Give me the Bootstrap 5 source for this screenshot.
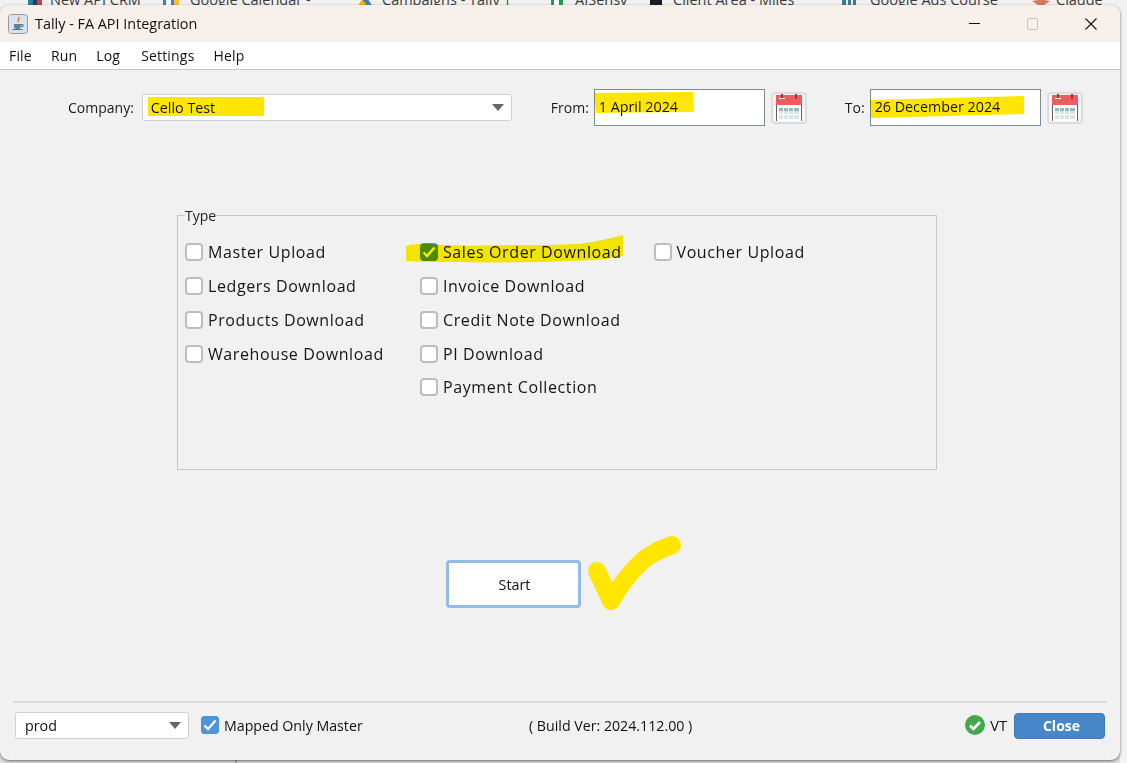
<!DOCTYPE html>
<html lang="en">
<head>
<meta charset="utf-8">
<title>Tally - FA API Integration</title>
<link href="https://cdn.jsdelivr.net/npm/bootstrap@5.3.0/dist/css/bootstrap.min.css" rel="stylesheet">
<style>
html,body{height:763px;overflow:hidden}
body{background:#dedede;font-family:"Open Sans","Noto Sans",sans-serif;color:#111;font-size:14px}
.desk-bar{height:20px;margin-bottom:-15px;background:#f1f1f1;overflow:hidden;position:relative;font-size:14.5px;color:#3c3c3c;line-height:14px}
.desk-bar span{position:absolute;top:-7px;white-space:nowrap}
.desk-bar svg{position:absolute;top:-5px}
.right-gap{position:fixed;left:1120px;top:0;width:7px;height:763px;background:#f3f3f3}
.back-tick{position:fixed;left:235px;top:755px;width:2px;height:8px;background:#a9a9a9}
.app-win{position:relative;width:1120px;height:755px;background:#f1f1f1;border-radius:9px;box-shadow:0 1px 3px rgba(0,0,0,.55);overflow:hidden}
.title-strip{height:37px;background:#f7efe9;font-size:14.4px;padding-left:8px;gap:7px}
.win-btn{width:58px;display:flex;justify-content:center;align-items:center}
.menu-strip{height:28px;background:#fff;border-bottom:1px solid #c9c9c9;padding-left:9px;gap:19px;font-size:14px;letter-spacing:.18px;line-height:27px}
.menu-log{margin-right:2px}
.top-row{margin-top:19px;height:37px;padding-left:68px}
.lbl{font-size:14px;white-space:nowrap;color:#1a1a1a}
.cmp-select.form-select,.env-select.form-select{font-family:inherit;font-size:14.3px;color:#111;border:1px solid #cfcfcf;border-radius:3px;height:27px;padding:0 20px 0 8px;background-color:#fff;background-image:url("data:image/svg+xml,%3Csvg xmlns='http://www.w3.org/2000/svg' width='12' height='7'%3E%3Cpath d='M0 0h12L6 7z' fill='%23666'/%3E%3C/svg%3E");background-size:12px 7px;background-position:right 7px center}
.cmp-select.form-select{width:370px;margin-left:8px;margin-right:39px}
.date-box{width:171px;height:37px;margin-left:5px;border:1px solid #7d8b99;background:#fff;padding:0 4px;line-height:33px;font-size:14.3px}
.cal-btn{width:36px;height:32px;margin-left:6px;padding:0;border:2px solid #dcdcdc;border-radius:4px;background:#f6f6f6;display:flex;align-items:center;justify-content:center}
.to-lbl{margin-left:38px}
.type-box{margin:78px 0 0 177px;width:760px;height:266px;border:1px solid #c8c8c8;padding:0 0 0 7px}
.type-box legend{float:none;width:auto;font-size:14px;line-height:20px;margin:0;padding:2px 0 0;color:#222}
.type-cols{padding-top:9px}
.type-col{width:235px;display:flex;flex-direction:column}
.type-col:nth-child(2){width:233.500px}
.chk-row{height:34px;display:flex;align-items:center;gap:5px;font-size:16px;letter-spacing:.6px;color:#151515;margin:0}
.chk-row:nth-child(5){margin-top:-1px}
.chk-row .form-check-input{width:18px;height:18px;margin:0;border:2px solid #bdbdbd;border-radius:4px;flex:none}
.chk-row .form-check-input:checked,.map-chk .form-check-input:checked{background-color:#4c94dc;border-color:#4c94dc;background-size:18px 18px;background-position:center;background-image:url("data:image/svg+xml,%3Csvg xmlns='http://www.w3.org/2000/svg' viewBox='0 0 18 18'%3E%3Cpath d='M3.500 9.500l3.500 3.500 7.500-8.500' fill='none' stroke='%23fff' stroke-width='2.400'/%3E%3C/svg%3E")}
.start-wrap{margin-top:90px;padding-left:446px}
.start-btn.btn{width:135px;height:48px;background:#fff;border:3px solid #93bce5;border-radius:4px;font-size:14.3px;color:#111;padding:2px 0 0 2px}
.foot-area{position:absolute;left:13px;right:13px;bottom:21px}
.foot-rule{height:2px;background:#dadada;margin:0 0 9px;border:0;opacity:1}
.env-select.form-select{width:174px;margin-left:2px;margin-right:12px;padding-left:9px}
.map-chk{gap:5px;font-size:14.2px}
.map-chk .form-check-input{width:18px;height:18px;margin:0;border-radius:3px;flex:none}
.build-ver{position:absolute;left:516px;font-size:14.2px;white-space:nowrap}
.vt-status{gap:5px;font-size:14.6px}
.close-btn.btn{width:91px;height:26px;background:#4687c9;border:1px solid #3f7ab6;border-radius:4px;color:#fff;font-weight:700;font-size:14px;padding:0 0 0 4px;margin-left:7px;margin-right:2px;line-height:22px}
.hi-ink{position:absolute;left:0;top:0;pointer-events:none;mix-blend-mode:multiply}
.tick-ink{position:absolute;left:0;top:0;pointer-events:none}
</style>
</head>
<body>
<div class="right-gap"></div>
<div class="back-tick"></div>
<div class="desk-bar">
  <svg style="left:28px" width="14" height="12"><rect width="5" height="12" fill="#2d7f88"/><rect x="5" width="4" height="12" fill="#1f3f73"/><rect x="9" width="5" height="12" fill="#c8443c"/></svg><span style="left:50px">New API CRM</span>
  <svg style="left:163px" width="16" height="12"><rect width="11" height="12" fill="#3f78d8"/><rect x="3" y="3" width="5" height="9" fill="#fff"/><rect x="11" width="5" height="12" fill="#f2c230"/></svg><span style="left:190px">Google Calendar -</span>
  <svg style="left:357px" width="16" height="12"><path d="M8 0l8 12H0z" fill="#f2b705"/><path d="M8 0l8 12h-5L5 4z" fill="#3f78d8"/></svg><span style="left:382px">Campaigns - Tally |</span>
  <svg style="left:550px" width="14" height="12"><rect width="14" height="12" fill="#fff"/><rect x="1" width="3" height="12" fill="#1c9c52"/><rect x="9" width="4" height="12" fill="#1c9c52"/></svg><span style="left:575px">AISensy</span>
  <svg style="left:650px" width="12" height="12"><rect width="12" height="12" fill="#1d1d2b"/></svg><span style="left:673px">Client Area - Miles</span>
  <svg style="left:842px" width="14" height="12"><rect width="14" height="12" fill="#3d7a8a"/><rect x="4" width="2" height="12" fill="#e8e8e8"/><rect x="9" width="2" height="12" fill="#e8e8e8"/></svg><span style="left:870px">Google Ads Course</span>
  <svg style="left:1032px" width="18" height="12"><path d="M9 12L0 6l6-1-2-5 5 3 5-3-2 5 6 1z" fill="#d9775a"/></svg><span style="left:1056px">Claude</span>
</div>
<div class="app-win d-flex flex-column">
  <div class="title-strip d-flex align-items-center">
    <svg width="20" height="20" viewBox="0 0 20 20"><rect x=".5" y=".5" width="19" height="19" rx="3" fill="#d9e3ec" stroke="#8a9aa8"/><path d="M10.500 3c1.500 2-1.500 3 0 5" stroke="#e0762b" stroke-width="1.500" fill="none"/><path d="M6 10h7v2.500a3 3 0 0 1-3 2.500a3 3 0 0 1-4-2.500z" fill="#5f7f9c"/><path d="M13 10.500h2v2h-2M4.500 15.500h10" stroke="#4f6f8c" fill="none"/></svg>
    <span class="flex-grow-1">Tally - FA API Integration</span>
    <div class="d-flex">
      <div class="win-btn"><svg width="12" height="2"><rect width="11" height="1" fill="#111"/></svg></div>
      <div class="win-btn"><svg width="12" height="12"><rect x=".5" y=".5" width="10" height="11" rx="1.500" fill="none" stroke="#c6c2bf"/></svg></div>
      <div class="win-btn"><svg width="12" height="12"><path d="M.5.5l11 11M11.500.500l-11 11" stroke="#111" stroke-width="1.100"/></svg></div>
    </div>
  </div>
  <div class="menu-strip d-flex">
    <span>File</span><span>Run</span><span class="menu-log">Log</span><span>Settings</span><span>Help</span>
  </div>
  <div class="top-row d-flex align-items-center">
    <span class="lbl">Company:</span>
    <select class="form-select cmp-select"><option>Cello Test</option></select>
    <span class="lbl">From:</span>
    <div class="date-box">1 April 2024</div>
    <button class="cal-btn" type="button" aria-label="Pick from date"><svg width="28" height="28" viewBox="0 0 28 28"><use href="#cal-ico"/></svg></button>
    <span class="lbl to-lbl">To:</span>
    <div class="date-box">26 December 2024</div>
    <button class="cal-btn" type="button" aria-label="Pick to date"><svg width="28" height="28" viewBox="0 0 28 28"><use href="#cal-ico"/></svg></button>
  </div>
  <fieldset class="type-box">
    <legend>Type</legend>
    <div class="type-cols d-flex">
      <div class="type-col">
        <label class="chk-row"><input class="form-check-input" type="checkbox">Master Upload</label>
        <label class="chk-row"><input class="form-check-input" type="checkbox">Ledgers Download</label>
        <label class="chk-row"><input class="form-check-input" type="checkbox">Products Download</label>
        <label class="chk-row"><input class="form-check-input" type="checkbox">Warehouse Download</label>
      </div>
      <div class="type-col">
        <label class="chk-row"><input class="form-check-input" type="checkbox" checked>Sales Order Download</label>
        <label class="chk-row"><input class="form-check-input" type="checkbox">Invoice Download</label>
        <label class="chk-row"><input class="form-check-input" type="checkbox">Credit Note Download</label>
        <label class="chk-row"><input class="form-check-input" type="checkbox">PI Download</label>
        <label class="chk-row"><input class="form-check-input" type="checkbox">Payment Collection</label>
      </div>
      <div class="type-col">
        <label class="chk-row"><input class="form-check-input" type="checkbox">Voucher Upload</label>
      </div>
    </div>
  </fieldset>
  <div class="start-wrap"><button class="btn start-btn" type="button">Start</button></div>
  <div class="foot-area">
    <hr class="foot-rule">
    <div class="d-flex align-items-center position-relative">
      <select class="form-select env-select"><option>prod</option></select>
      <label class="map-chk d-flex align-items-center"><input class="form-check-input" type="checkbox" checked>Mapped Only Master</label>
      <span class="build-ver">( Build Ver: 2024.112.00 )</span>
      <span class="ms-auto d-flex align-items-center vt-status">
        <svg width="20" height="20" viewBox="0 0 20 20"><circle cx="10" cy="10" r="10" fill="#46a84d"/><path d="M5 10.500l3.500 3.500 6.500-7" stroke="#fff" stroke-width="2.600" fill="none"/></svg>
        <span>VT</span>
      </span>
      <button class="btn close-btn" type="button">Close</button>
    </div>
  </div>
  <svg class="hi-ink" width="1120" height="755" viewBox="0 5 1120 755">
    <rect x="148" y="97" width="116" height="19" fill="#ffe600"/>
    <path d="M594 93l99-1 1 20-98 1z" fill="#ffe600"/>
    <path d="M870 100l154-4 0 18-153 4z" fill="#ffe600"/>
    <path d="M406 246c6-2 14-2 22-2 25 2 50 2 80 1 30 0 50 0 70-1 18-2 30-5 45-9l0 21c-8 2-18 3-30 4-40 2-90 3-140 2-15 0-30 0-47-1z" fill="#fff200"/>
  </svg>
  <svg class="tick-ink" width="1120" height="755" viewBox="0 5 1120 755">
    <path d="M597 571l14 30c8-14 17-26 28-37 10-10 20-14 33-19" fill="none" stroke="#ffe600" stroke-width="18" stroke-linecap="round" stroke-linejoin="round"/>
  </svg>
</div>
<svg width="0" height="0" class="position-absolute">
  <defs>
    <g id="cal-ico">
      <rect x="1" y="1" width="26" height="26" rx="1" fill="#fff"/>
      <rect x="1" y="1" width="26" height="10" fill="#ee5c62"/>
      <rect x="1" y="11" width="1" height="16" fill="#6d5c5c"/><rect x="26" y="11" width="1" height="16" fill="#6d5c5c"/>
      <rect x="6" y="0" width="2" height="5" fill="#a33"/><rect x="20" y="0" width="2" height="5" fill="#a33"/>
      <rect x="4" y="4" width="6" height="1" fill="#fff"/>
      <rect x="4" y="14" width="20" height="11" fill="#d6e6e4"/>
      <rect x="4" y="14" width="20" height="3" fill="#9fb3b3"/>
      <path d="M8.500 14v11M13.500 14v11M18.500 14v11M4 20.500h20" stroke="#fff"/>
    </g>
  </defs>
</svg>
</body>
</html>
